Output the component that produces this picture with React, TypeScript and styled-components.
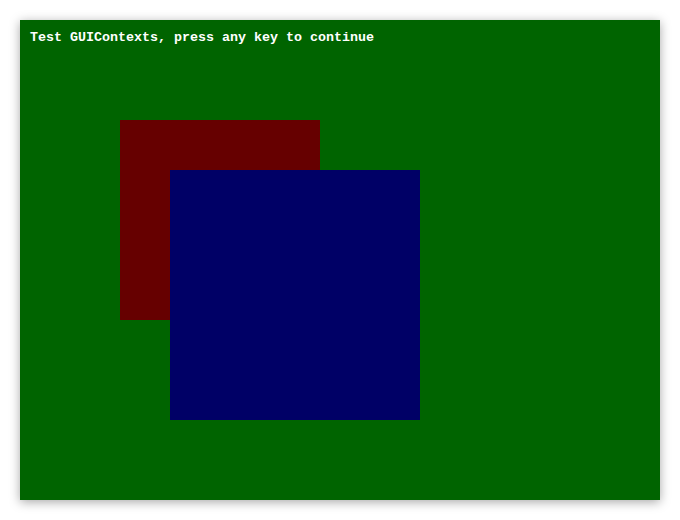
import React from "react";
import styled, { createGlobalStyle } from "styled-components";

const Global = createGlobalStyle`
  html, body { margin: 0; padding: 0; background: #ffffff; }
  body { width: 680px; height: 520px; overflow: hidden; }
`;

const Page = styled.div`
  padding: 20px;
  box-sizing: border-box;
  width: 680px;
  height: 520px;
`;

const Screen = styled.div`
  position: relative;
  width: 640px;
  height: 480px;
  background: #006400;
  box-shadow: 0 2px 10px rgba(0, 0, 0, 0.35);
  padding: 10px 10px;
  box-sizing: border-box;
`;

const Caption = styled.div`
  font-family: "Liberation Mono", "DejaVu Sans Mono", monospace;
  font-weight: bold;
  font-size: 13.33px;
  line-height: 16px;
  color: #ffffff;
  white-space: pre;
`;

const Context = styled.div<{ $x: number; $y: number; $size: number; $color: string }>`
  position: absolute;
  left: ${(p) => p.$x}px;
  top: ${(p) => p.$y}px;
  width: ${(p) => p.$size}px;
  height: ${(p) => p.$size}px;
  background: ${(p) => p.$color};
`;

export default function App() {
  return (
    <Page>
      <Global />
      <Screen>
        <Caption>Test GUIContexts, press any key to continue</Caption>
        <Context $x={100} $y={100} $size={200} $color="#660000" />
        <Context $x={150} $y={150} $size={250} $color="#000066" />
      </Screen>
    </Page>
  );
}
